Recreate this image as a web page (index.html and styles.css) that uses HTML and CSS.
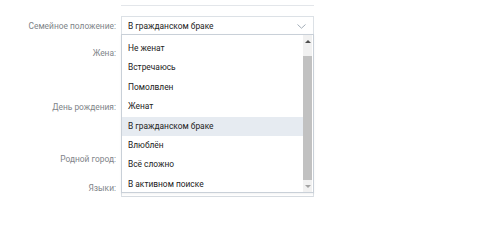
FILE: index.html
```html
<!DOCTYPE html>
<html lang="ru">
<head>
<meta charset="utf-8">
<link rel="stylesheet" href="styles.css">
</head>
<body>
<div class="form">
  <div class="row row-prev">
    <div class="label"></div>
    <div class="field field-prev"></div>
  </div>
  <div class="row row-status">
    <div class="label">Семейное положение:</div>
    <div class="field select">
      <span class="value">В гражданском браке</span>
      <svg class="chevron" width="9" height="5" viewBox="0 0 9 5"><path d="M0.5 0.5 L4.5 4.2 L8.5 0.5" fill="none" stroke="#a3adb8" stroke-width="1"/></svg>
      <div class="dropdown">
        <ul class="options">
          <li>Не женат</li>
          <li>Встречаюсь</li>
          <li>Помолвлен</li>
          <li>Женат</li>
          <li class="active">В гражданском браке</li>
          <li>Влюблён</li>
          <li>Всё сложно</li>
          <li>В активном поиске</li>
        </ul>
        <div class="scrollbar">
          <div class="sb-btn sb-up"><span class="tri-up"></span></div>
          <div class="sb-track"><div class="sb-thumb"></div></div>
          <div class="sb-btn sb-down"><span class="tri-down"></span></div>
        </div>
      </div>
    </div>
  </div>
  <div class="row row-wife">
    <div class="label">Жена:</div>
    <div class="field"></div>
  </div>
  <div class="row row-bday">
    <div class="label">День рождения:</div>
    <div class="field"></div>
  </div>
  <div class="row row-city">
    <div class="label">Родной город:</div>
    <div class="field"></div>
  </div>
  <div class="row row-lang">
    <div class="label">Языки:</div>
    <div class="field field-lang"></div>
  </div>
</div>
</body>
</html>
```
FILE: styles.css
```css
html, body {
  margin: 0;
  padding: 0;
  background: #ffffff;
}
body {
  width: 480px;
  height: 214px;
  overflow: hidden;
  font-family: Roboto, "Open Sans", "Liberation Sans", sans-serif;
  font-size: 8.4px;
}
.form {
  display: flex;
  flex-direction: column;
}
.row {
  display: grid;
  grid-template-columns: 116px 193px;
  column-gap: 5px;
  align-items: center;
  height: 19px;
}
.label {
  text-align: right;
  color: #808489;
  white-space: nowrap;
}
.field {
  box-sizing: border-box;
  height: 19px;
  border: 1px solid #dce1e6;
  background: #fff;
}
.row-prev {
  height: 6px;
}
.field-prev {
  height: 6px;
  border: none;
  border-bottom: 1px solid #e3e6ea;
}
.field-lang {
  border-bottom-color: #d6dbe0;
}
.row-status { margin-top: 10px; }
.row-wife { margin-top: 8px; }
.row-bday { margin-top: 35px; }
.row-city { margin-top: 33px; }
.row-lang { margin-top: 10px; }

.select {
  position: relative;
  display: flex;
  align-items: center;
  padding-left: 6px;
  color: #222;
  z-index: 2;
}
.chevron {
  position: absolute;
  right: 7px;
  top: 7px;
}
.dropdown {
  position: absolute;
  left: -1px;
  top: 17px;
  width: 193px;
  height: 159px;
  box-sizing: border-box;
  border: 1px solid #c9d0d8;
  background: #fff;
  overflow: hidden;
  display: flex;
  box-shadow: 0 1px 2px rgba(0, 0, 0, 0.06);
}
.options {
  list-style: none;
  margin: 0;
  padding: 4px 0 0 0;
  flex: 1;
}
.options li {
  height: 19.4px;
  line-height: 19.4px;
  padding-left: 6px;
  color: #222;
  white-space: nowrap;
}
.options li.active {
  background: #e6ebf1;
}
.scrollbar {
  width: 9px;
  margin-right: 1px;
  display: flex;
  flex-direction: column;
  background: #f1f1f1;
}
.sb-btn {
  display: flex;
  justify-content: center;
  align-items: center;
  height: 12px;
}
.sb-track {
  flex: 1;
  padding-top: 9px;
  display: flex;
  flex-direction: column;
}
.sb-thumb {
  flex: 1;
  background: #c1c1c1;
}
.tri-up {
  width: 0;
  height: 0;
  border-left: 3px solid transparent;
  border-right: 3px solid transparent;
  border-bottom: 3px solid #505050;
}
.tri-down {
  width: 0;
  height: 0;
  border-left: 3px solid transparent;
  border-right: 3px solid transparent;
  border-top: 3px solid #a3a3a3;
}
```
